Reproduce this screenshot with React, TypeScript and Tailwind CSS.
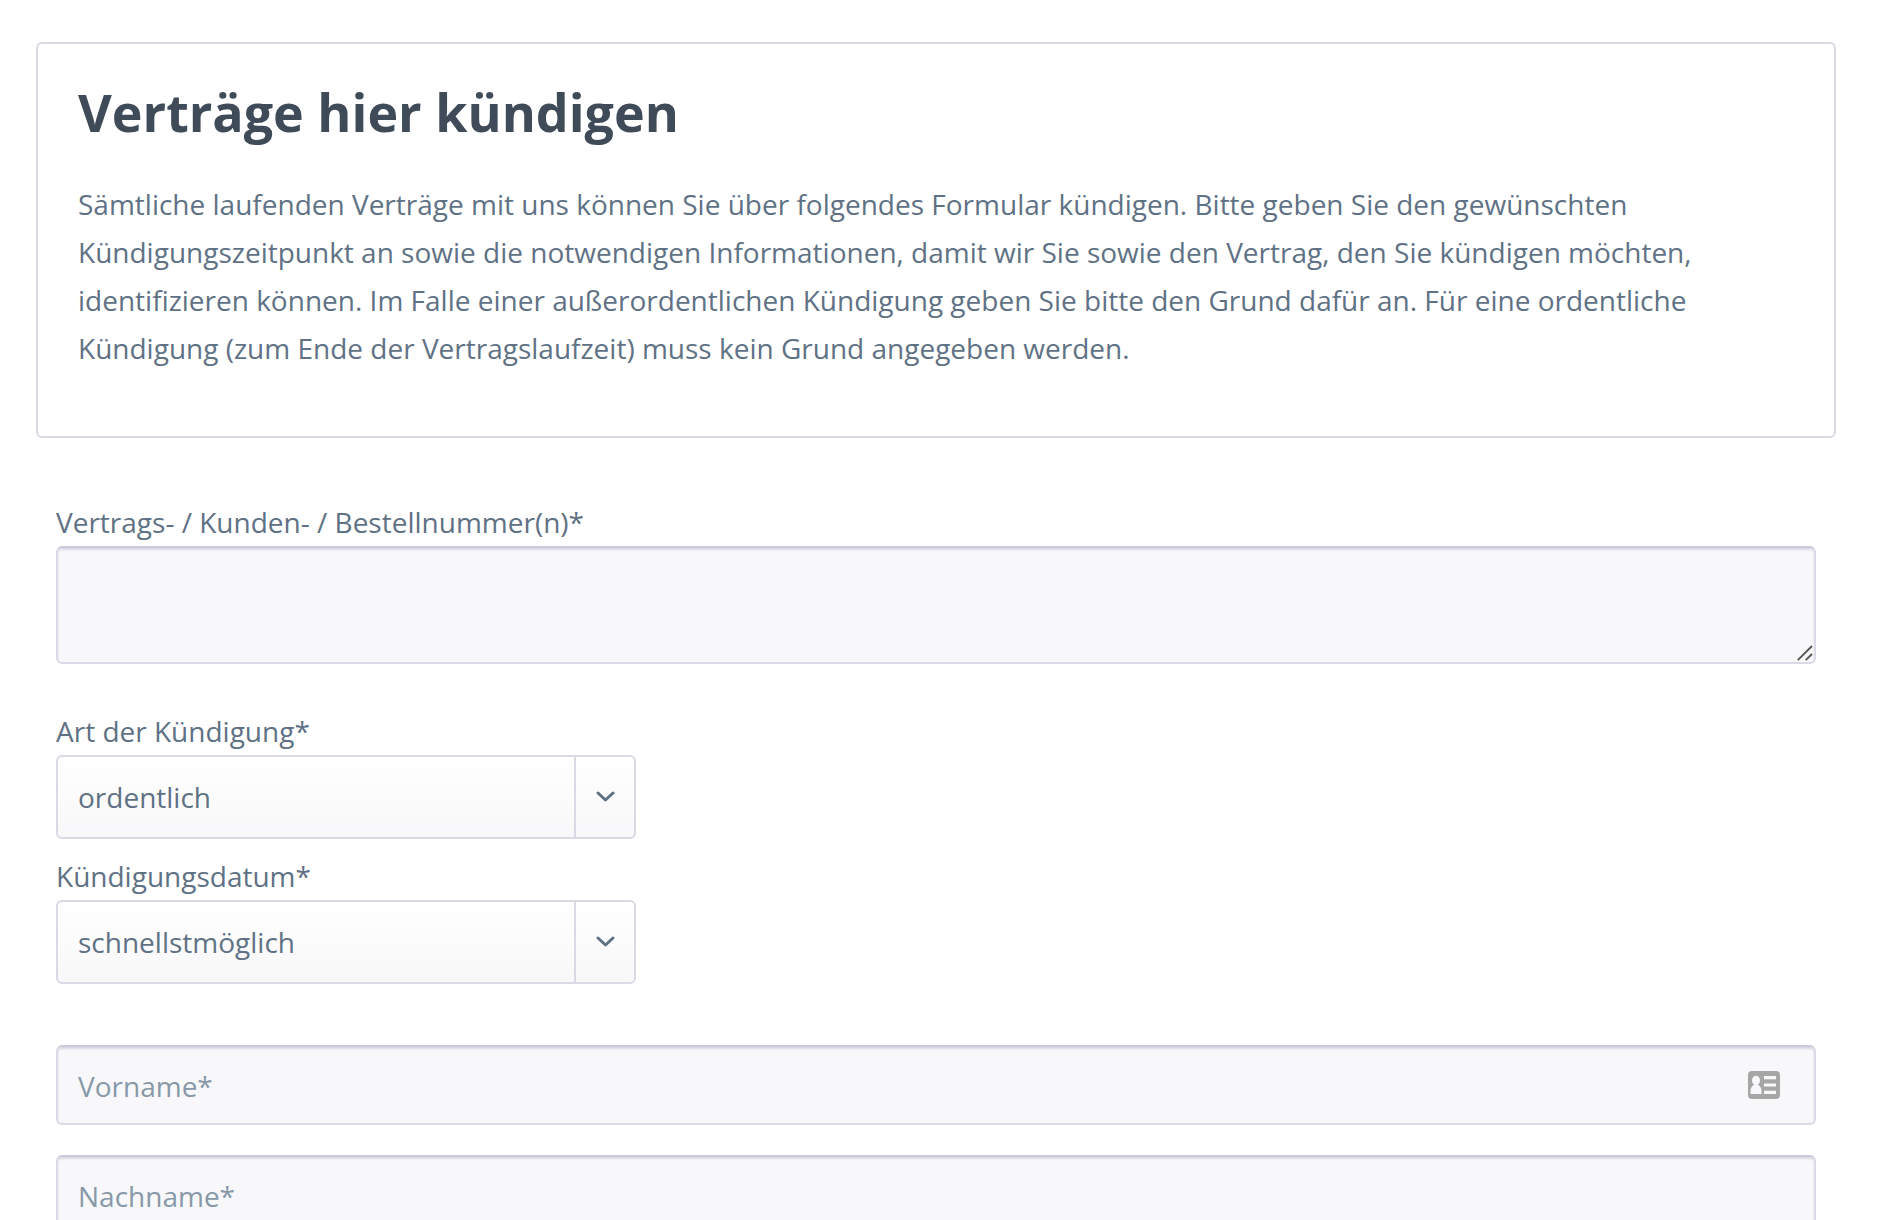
import type { ReactNode } from 'react';

function Chevron() {
  return (
    <svg viewBox="0 0 20 12" className="h-3 w-5" fill="none" stroke="#5f7285" strokeWidth="3" strokeLinecap="round" strokeLinejoin="round" aria-hidden="true">
      <path d="M3 2 10.500 9 18 2" />
    </svg>
  );
}

function ContactCardIcon() {
  return (
    <svg viewBox="0 0 32 28" className="h-7 w-8" aria-hidden="true">
      <rect width="32" height="28" rx="4" fill="#a6a6a6" />
      <g fill="#f8f8fa">
        <ellipse cx="8" cy="9.500" rx="4" ry="4.800" />
        <path d="M2.500 23v-2.500c0-3.200 1.200-5.500 3.200-6.500h4.600c2 1 3.200 3.300 3.200 6.500V23z" />
        <rect x="16" y="5" width="12" height="3.300" />
        <rect x="16" y="12.500" width="12" height="3" />
        <rect x="16" y="19.700" width="12" height="3.300" />
      </g>
    </svg>
  );
}

function ResizeGrip() {
  return (
    <svg viewBox="0 0 16 16" className="pointer-events-none absolute right-[3px] bottom-[3px] h-4 w-4" fill="none" stroke="#555" strokeWidth="1.900" aria-hidden="true">
      <path d="M.8 15.200 15 1M8.800 15.200l6.200-6.200" />
    </svg>
  );
}

const fieldClass =
  'block w-full rounded-md border-2 border-[#dad9e5] border-t-[#cbcadb] bg-[#f8f8fa] px-5 text-[28px] text-[#5f7285] shadow-[inset_0_2px_2px_#dad9e5] outline-none placeholder:text-[#8798a9] placeholder:opacity-100';

function Label({ htmlFor, children }: { htmlFor: string; children: ReactNode }) {
  return (
    <label htmlFor={htmlFor} className="block pb-1 leading-10">
      {children}
    </label>
  );
}

function SelectField({ id, label, options }: { id: string; label: string; options: string[] }) {
  return (
    <div>
      <Label htmlFor={id}>{label}</Label>
      <div className="relative max-w-[580px]">
        <select
          id={id}
          defaultValue={options[0]}
          className="block h-[84px] w-full appearance-none rounded-md border-2 border-[#dad9e5] bg-linear-to-b from-white to-[#f8f8fa] pr-20 pl-5 text-[28px] text-[#5f7285] outline-none"
        >
          {options.map((option) => (
            <option key={option}>{option}</option>
          ))}
        </select>
        <span className="pointer-events-none absolute inset-y-0.5 right-0.5 flex w-[60px] items-center justify-center border-l-2 border-[#dad9e5]">
          <Chevron />
        </span>
      </div>
    </div>
  );
}

export default function App() {
  return (
    <main className="bg-white pt-[42px] pr-[46px] pb-10 pl-9 font-['Open_Sans',sans-serif] text-[28px] text-[#5f7285]">
      <section className="rounded-md border-2 border-[#dad9e5] px-10 pt-8 pb-16">
        <h1 className="text-[52px] leading-[72px] font-bold text-[#3f4b58]">Verträge hier kündigen</h1>
        <p className="mt-8 leading-[48px]">
          Sämtliche laufenden Verträge mit uns können Sie über folgendes Formular kündigen. Bitte geben Sie den
          gewünschten Kündigungszeitpunkt an sowie die notwendigen Informationen, damit wir Sie sowie den Vertrag, den
          Sie kündigen möchten, identifizieren können. Im Falle einer außerordentlichen Kündigung geben Sie bitte den
          Grund dafür an. Für eine ordentliche Kündigung (zum Ende der Vertragslaufzeit) muss kein Grund angegeben
          werden.
        </p>
      </section>

      <form className="px-5 pt-16">
        <Label htmlFor="contract">Vertrags- / Kunden- / Bestellnummer(n)*</Label>
        <div className="relative">
          <textarea id="contract" className={`${fieldClass} h-[118px] resize-none py-4`} />
          <ResizeGrip />
        </div>

        <div className="mt-[47px] flex flex-col gap-[17px]">
          <SelectField id="kind" label="Art der Kündigung*" options={['ordentlich', 'außerordentlich']} />
          <SelectField id="date" label="Kündigungsdatum*" options={['schnellstmöglich', 'zum Datum']} />
        </div>

        <div className="mt-[61px] flex flex-col gap-[30px]">
          <div className="relative">
            <input type="text" placeholder="Vorname*" aria-label="Vorname" className={`${fieldClass} h-20 pt-0.5`} />
            <span className="pointer-events-none absolute inset-y-0 right-9 flex items-center">
              <ContactCardIcon />
            </span>
          </div>
          <input type="text" placeholder="Nachname*" aria-label="Nachname" className={`${fieldClass} h-20 pt-0.5`} />
        </div>
      </form>
    </main>
  );
}
